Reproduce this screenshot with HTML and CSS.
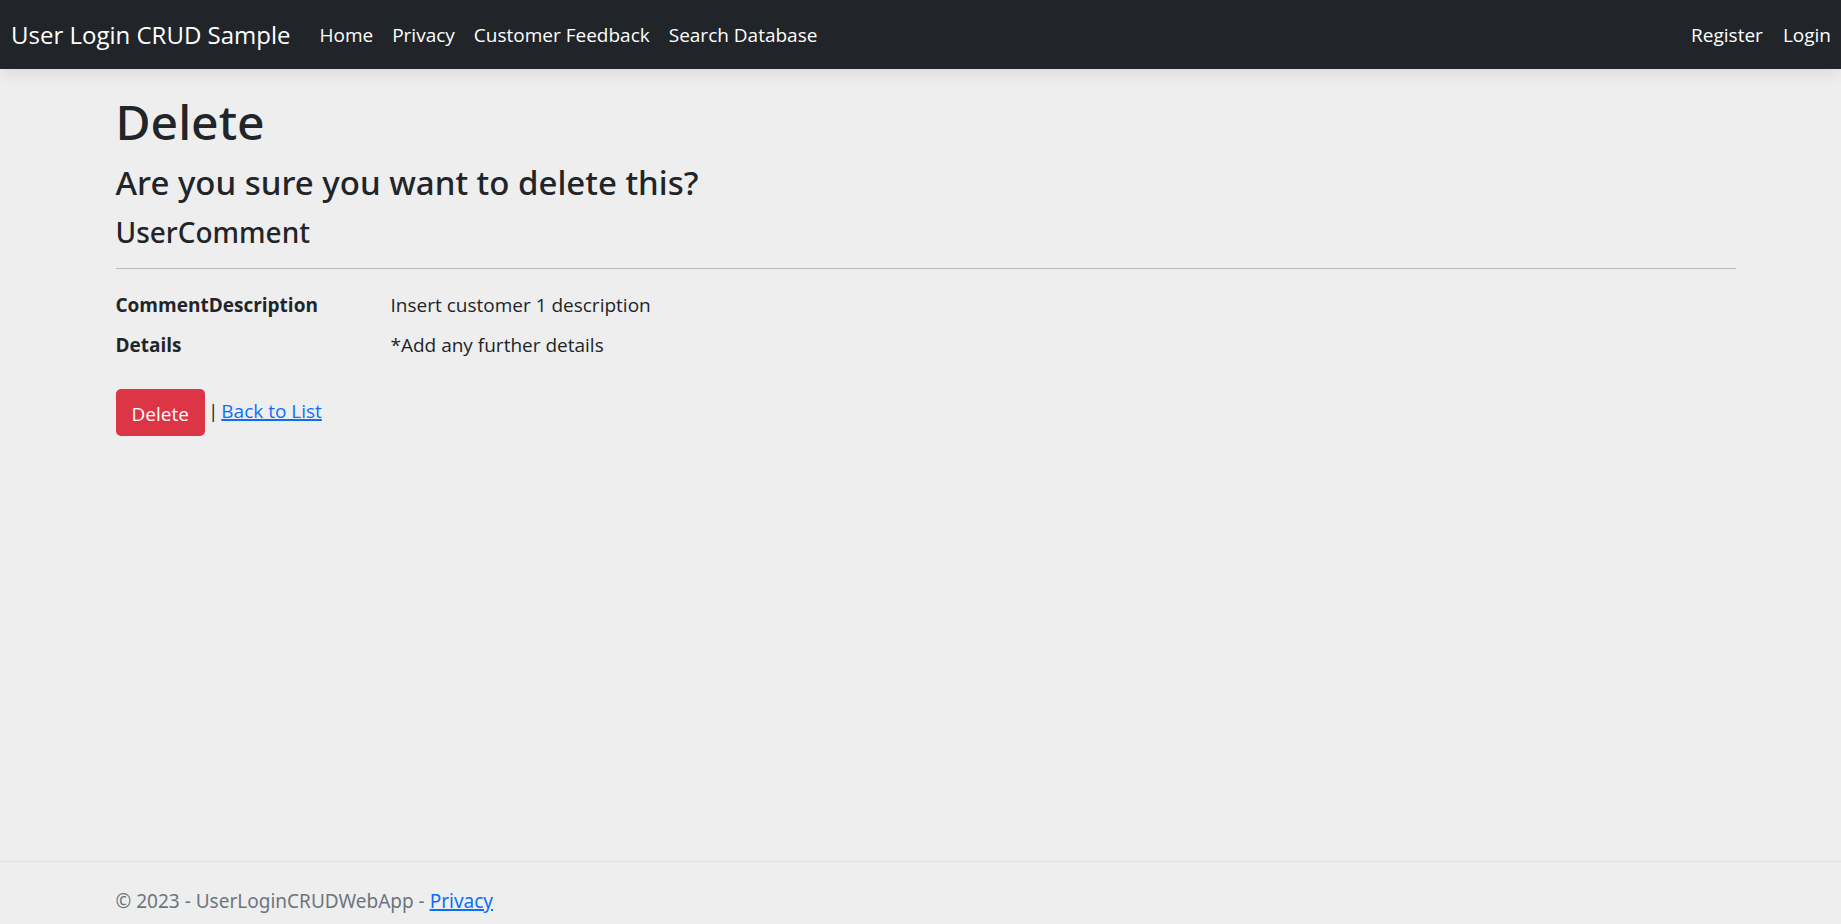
FILE: index.html
```html
<!DOCTYPE html>
<html lang="en">
<head>
<meta charset="utf-8">
<meta name="viewport" content="width=device-width, initial-scale=1">
<title>Delete - User Login CRUD Sample</title>
<link rel="stylesheet" href="styles.css">
</head>
<body>
<header class="navbar">
  <a class="navbar-brand" href="#">User Login CRUD Sample</a>
  <nav class="navbar-menu" aria-label="Main">
    <ul class="nav-list">
      <li><a class="nav-link" href="#">Home</a></li>
      <li><a class="nav-link" href="#">Privacy</a></li>
      <li><a class="nav-link" href="#">Customer Feedback</a></li>
      <li><a class="nav-link" href="#">Search Database</a></li>
    </ul>
    <ul class="nav-list">
      <li><a class="nav-link" href="#">Register</a></li>
      <li><a class="nav-link" href="#">Login</a></li>
    </ul>
  </nav>
</header>
<main class="container page">
  <h1 class="title">Delete</h1>
  <h3 class="question">Are you sure you want to delete this?</h3>
  <h4 class="entity">UserComment</h4>
  <hr class="rule">
  <dl class="details">
    <dt>CommentDescription</dt>
    <dd>Insert customer 1 description</dd>
    <dt>Details</dt>
    <dd>*Add any further details</dd>
  </dl>
  <form class="actions">
    <button class="btn-danger" type="submit">Delete</button>
    <span class="divider">|</span>
    <a class="link" href="#">Back to List</a>
  </form>
</main>
<footer class="footer">
  <div class="container">© 2023 - UserLoginCRUDWebApp - <a class="link" href="#">Privacy</a></div>
</footer>
</body>
</html>
```

FILE: styles.css
```css
*, *::before, *::after { box-sizing: border-box; }

body {
  display: flex;
  flex-direction: column;
  min-height: 100vh;
  margin: 0;
  background: #eee;
  color: #212529;
  font-family: "Segoe UI", "Open Sans", "Noto Sans", sans-serif;
  font-size: 19px;
  line-height: 30px;
}

.navbar {
  display: flex;
  align-items: center;
  min-height: 69px;
  padding: 0 10px 0 11px;
  background: #212529;
  box-shadow: 0 5px 15px rgba(0, 0, 0, .08);
}

.navbar a { color: #fff; text-decoration: none; white-space: nowrap; }

.navbar-brand { margin-right: 19px; font-size: 24px; }

.navbar-menu {
  display: flex;
  flex: 1;
  justify-content: space-between;
}

.nav-list {
  display: flex;
  margin: 0;
  padding: 0;
  list-style: none;
}

.nav-list:first-child { gap: 19px; padding-left: 10px; }
.nav-list:last-child { gap: 20px; }

.container {
  width: 100%;
  max-width: 1650px;
  margin: 0 auto;
  padding: 0 10px 0 20px;
}

.page { flex: 1; padding-top: 23px; }

.title, .question, .entity {
  margin: 0 0 10px;
  font-family: "Segoe UI", "Noto Sans", sans-serif;
  font-weight: 500;
}
.title { font-size: 48px; line-height: 60px; }
.question { font-size: 33px; line-height: 42px; }
.entity { font-size: 28px; line-height: 36px; }

.rule {
  height: 1px;
  margin: 18px 0 21px;
  border: 0;
  background: #bbb;
}

.details {
  display: grid;
  grid-template-columns: 275px 1fr;
  row-gap: 10px;
  margin: 0 0 29px;
}

.details dt { font-weight: 700; }
.details dd { margin: 0; }

.actions { display: flex; align-items: center; gap: 3px; }
.actions .divider, .actions .link { padding-bottom: 4px; }

.btn-danger {
  min-height: 47px;
  padding: 10px 16px 7px;
  border: 0;
  border-radius: 5px;
  background: #dc3545;
  color: #fff;
  font: inherit;
  cursor: pointer;
}

.link {
  color: #0d6efd;
  text-decoration: underline;
  text-decoration-thickness: 2px;
}

.footer {
  padding: 24px 0 8px;
  border-top: 1px solid #dee2e6;
  color: #6c757d;
  font-family: "Segoe UI", "Noto Sans", sans-serif;
}
```
